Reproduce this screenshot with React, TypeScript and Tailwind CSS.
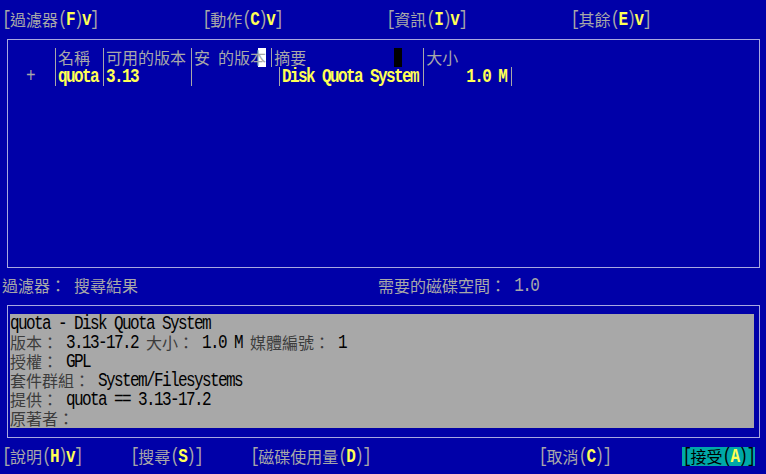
import type { ReactNode } from 'react';

// one console cell is 8px wide and 19px tall; CJK glyphs take two cells
const MONO =
  "inline-block h-[19px] font-[family-name:'Liberation_Mono',monospace] text-[16px] leading-[19px] tracking-[-1.6px] scale-y-[1.25] translate-y-[1px]";
const CJK =
  "inline-block h-[19px] font-[family-name:'Noto_Sans_CJK_TC',sans-serif] text-[16px] leading-[19px] tracking-normal";
const WIDE = /[\u2E80-\u9FFF\uAC00-\uD7A3\uF900-\uFAFF\uFF00-\uFF60\uFFE0-\uFFE6]/;

const GRAY = 'text-[#a8a8a8]';
const YEL = 'text-[#ffff54] font-bold';
const LABEL = 'text-[#3c3c3c]';

function Txt({ t, className = GRAY }: { t: string; className?: string }) {
  const parts: { s: string; wide: boolean }[] = [];
  for (const ch of t) {
    const wide = WIDE.test(ch);
    const last = parts[parts.length - 1];
    if (last && last.wide === wide) last.s += ch;
    else parts.push({ s: ch, wide });
  }
  return (
    <span className={`flex h-[19px] shrink-0 whitespace-pre ${className}`}>
      {parts.map((p, i) => (
        <span key={i} className={p.wide ? CJK : MONO}>
          {p.s}
        </span>
      ))}
    </span>
  );
}

function Gap({ n }: { n: number }) {
  return <Txt t={' '.repeat(n)} />;
}

function Row({ children, className = '' }: { children?: ReactNode; className?: string }) {
  return <div className={`flex h-[19px] shrink-0 items-start ${className}`}>{children}</div>;
}

function Sep() {
  return (
    <span className="flex h-[19px] w-[8px] shrink-0 pl-[5px]">
      <span className="h-full w-px bg-[#a8a8a8]" />
    </span>
  );
}

function Menu({ label, hot, drop }: { label: string; hot: string; drop?: boolean }) {
  return (
    <>
      <Txt t={`[${label}(`} />
      <Txt t={hot} className={YEL} />
      <Txt t=")" />
      {drop && <Txt t="v" className={YEL} />}
      <Txt t="]" />
    </>
  );
}

export default function App() {
  return (
    <div className="flex h-[474px] w-[766px] flex-col overflow-hidden bg-[#0000a8] pl-[2px] pt-[10px]">
      {/* menu bar */}
      <Row>
        <Menu label="過濾器" hot="F" drop />
        <Gap n={13} />
        <Menu label="動作" hot="C" drop />
        <Gap n={13} />
        <Menu label="資訊" hot="I" drop />
        <Gap n={13} />
        <Menu label="其餘" hot="E" drop />
      </Row>

      {/* package table */}
      <div className="h-[247px] shrink-0">
        <div className="ml-[5px] mt-[10px] h-[229px] w-[753px] border border-[#a8a8e0] pl-[2px] pt-[8px]">
          <Row>
            <Gap n={5} />
            <Sep />
            <Txt t="名稱 " />
            <Sep />
            <Txt t="可用的版本" />
            <Sep />
            <Txt t="安 的版" />
            <Txt t="本" className={`${GRAY} bg-[linear-gradient(to_right,transparent_50%,#ffffff_50%)]`} />
            <Sep />
            <Txt t="摘要" />
            <Gap n={11} />
            <span className="h-[19px] w-[8px] shrink-0 bg-black" />
            <Gap n={2} />
            <Sep />
            <Txt t="大小" />
          </Row>
          <Row>
            <Txt t="  +  " />
            <Sep />
            <Txt t="quota" className={YEL} />
            <Sep />
            <Txt t="3.13      " className={YEL} />
            <Sep />
            <Gap n={10} />
            <Sep />
            <Txt t="Disk Quota System" className={YEL} />
            <Sep />
            <Txt t="     1.0 M" className={YEL} />
            <Sep />
          </Row>
        </div>
      </div>

      {/* status line */}
      <Row>
        <Txt t="過濾器： 搜尋結果" />
        <Gap n={30} />
        <Txt t="需要的磁碟空間： 1.0" />
      </Row>

      {/* package details */}
      <div className="h-[152px] shrink-0">
        <div className="ml-[5px] mt-[10px] h-[133px] w-[753px] border border-[#a8a8e0] pl-[2px] pt-[8px]">
          <div className="flex w-[744px] flex-col bg-[#a8a8a8]">
            <Row>
              <Txt t="quota - Disk Quota System" className="text-black" />
            </Row>
            <Row>
              <Txt t="版本：" className={LABEL} />
              <Txt t=" 3.13-17.2 " className="text-black" />
              <Txt t="大小：" className={LABEL} />
              <Txt t=" 1.0 M " className="text-black" />
              <Txt t="媒體編號：" className={LABEL} />
              <Txt t=" 1" className="text-black" />
            </Row>
            <Row>
              <Txt t="授權：" className={LABEL} />
              <Txt t=" GPL" className="text-black" />
            </Row>
            <Row>
              <Txt t="套件群組：" className={LABEL} />
              <Txt t=" System/Filesystems" className="text-black" />
            </Row>
            <Row>
              <Txt t="提供：" className={LABEL} />
              <Txt t=" quota == 3.13-17.2" className="text-black" />
            </Row>
            <Row>
              <Txt t="原著者：" className={LABEL} />
            </Row>
          </div>
        </div>
      </div>

      {/* button bar */}
      <Row>
        <Menu label="說明" hot="H" drop />
        <Gap n={6} />
        <Menu label="搜尋" hot="S" />
        <Gap n={6} />
        <Menu label="磁碟使用量" hot="D" />
        <Gap n={21} />
        <Menu label="取消" hot="C" />
        <Gap n={9} />
        <span className="flex bg-[#00a8a8]">
          <Txt t="[接受(" className="text-black" />
          <Txt t="A" className={YEL} />
          <Txt t=")]" className="text-black" />
        </span>
      </Row>
    </div>
  );
}
